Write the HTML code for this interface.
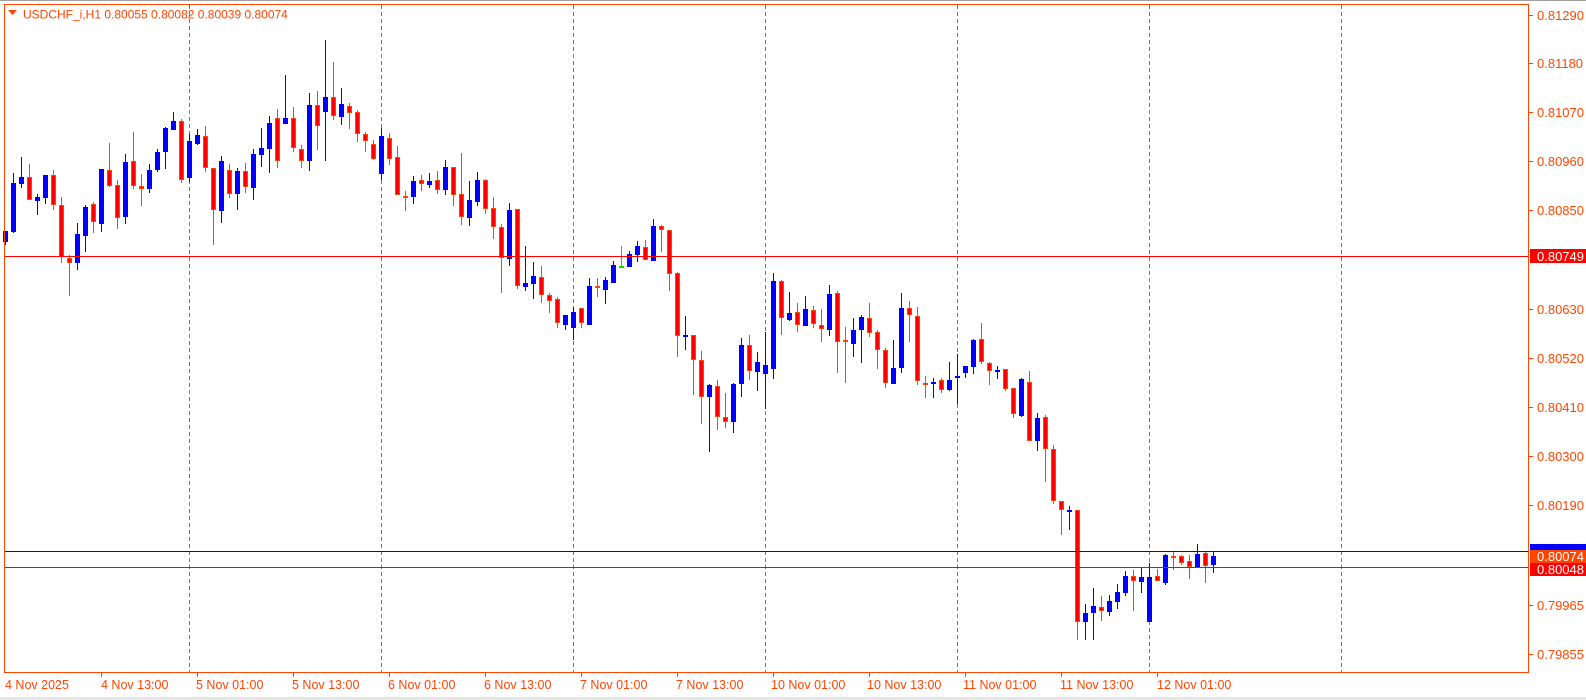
<!DOCTYPE html>
<html><head><meta charset="utf-8">
<style>
html,body{margin:0;padding:0;background:#fff;width:1586px;height:700px;overflow:hidden}
svg{display:block}
text{font-family:"Liberation Sans",Arial,sans-serif}
</style></head>
<body>
<svg id="c" width="1586" height="700" viewBox="0 0 1586 700" xmlns="http://www.w3.org/2000/svg">
<rect x="0" y="0" width="1586" height="700" fill="#fff"/>
<rect x="0" y="0" width="1586" height="1" fill="#a0a0a0"/>
<rect x="0" y="697" width="1586" height="3" fill="#e6e6e6"/>
<g id="grid" stroke="#ff4500" stroke-width="1" stroke-dasharray="4,3">
<line x1="189.5" y1="5" x2="189.5" y2="673"/>
<line x1="381.5" y1="5" x2="381.5" y2="673"/>
<line x1="573.5" y1="5" x2="573.5" y2="673"/>
<line x1="765.5" y1="5" x2="765.5" y2="673"/>
<line x1="957.5" y1="5" x2="957.5" y2="673"/>
<line x1="1149.5" y1="5" x2="1149.5" y2="673"/>
<line x1="1341.5" y1="5" x2="1341.5" y2="673"/>
</g>
<g id="candles"></g>
<line x1="4" y1="256.5" x2="1529" y2="256.5" stroke="#ff0000"/>
<line x1="4" y1="551.5" x2="1529" y2="551.5" stroke="#0000ff"/>
<line x1="4" y1="567.5" x2="1529" y2="567.5" stroke="#ff0000"/>
<rect x="4.5" y="4.5" width="1524" height="668" fill="none" stroke="#ff4500"/>
<g fill="#ff4500" font-size="13" id="axis"></g>
<polygon points="8,10 17,10 12.5,15" fill="#ff4500"/>
<text x="23" y="18.5" font-size="12" fill="#ff4500">USDCHF_i,H1  0.80055 0.80082 0.80039 0.80074</text>
<g fill="#ff4500" font-size="12.5">
<text x="5" y="689">4 Nov 2025</text>
<text x="101" y="689">4 Nov 13:00</text>
<text x="196" y="689">5 Nov 01:00</text>
<text x="292" y="689">5 Nov 13:00</text>
<text x="388" y="689">6 Nov 01:00</text>
<text x="484" y="689">6 Nov 13:00</text>
<text x="580" y="689">7 Nov 01:00</text>
<text x="676" y="689">7 Nov 13:00</text>
<text x="771" y="689">10 Nov 01:00</text>
<text x="867" y="689">10 Nov 13:00</text>
<text x="963" y="689">11 Nov 01:00</text>
<text x="1060" y="689">11 Nov 13:00</text>
<text x="1157" y="689">12 Nov 01:00</text>
</g>
<g stroke="#ff4500">
<line x1="101.5" y1="673" x2="101.5" y2="677"/><line x1="197.5" y1="673" x2="197.5" y2="677"/>
<line x1="293.5" y1="673" x2="293.5" y2="677"/><line x1="389.5" y1="673" x2="389.5" y2="677"/>
<line x1="485.5" y1="673" x2="485.5" y2="677"/><line x1="581.5" y1="673" x2="581.5" y2="677"/>
<line x1="677.5" y1="673" x2="677.5" y2="677"/><line x1="773.5" y1="673" x2="773.5" y2="677"/>
<line x1="869.5" y1="673" x2="869.5" y2="677"/><line x1="965.5" y1="673" x2="965.5" y2="677"/>
<line x1="1061.5" y1="673" x2="1061.5" y2="677"/><line x1="1157.5" y1="673" x2="1157.5" y2="677"/>
</g>
<rect x="1530" y="544" width="56" height="8" fill="#0000ff"/>
<rect x="1530" y="550" width="56" height="13" fill="#ff4500"/>
<text x="1537" y="561" font-size="13" fill="#fff">0.80074</text>
<rect x="1530" y="563" width="56" height="13" fill="#ff0000"/>
<text x="1537" y="574" font-size="13" fill="#fff">0.80048</text>
<rect x="1530" y="249" width="56" height="14" fill="#ff0000"/>
<text x="1537" y="261" font-size="13" fill="#fff">0.80749</text>
</svg>
<script>
var D=[
"b 231 245 231 242","b 173 233 183 232","b 157 188 177 184","r 164 200 177 200","b 194 215 197 201","b 175 204 175 198","r 170 210 175 205","r 197 263 205 257","r 255 296 258 263","b 223 270 234 263",
"b 205 252 207 236","r 202 233 204 222","b 169 232 169 224","r 143 187 170 186","r 180 229 185 218","b 154 224 162 217","r 132 189 161 186","r 174 206 186 189","b 164 193 170 189","b 149 172 152 170",
"b 127 169 128 152","b 112 130 121 130","r 119 183 121 180","b 134 182 141 178","b 129 145 135 144","r 126 172 136 168","r 168 245 168 210","b 156 223 161 211","r 164 198 170 194","b 168 210 171 194",
"r 163 193 171 187","b 149 200 154 188","b 128 167 148 155","b 116 173 123 149","r 109 168 118 161","b 75 124 118 124","r 107 152 118 148","r 145 168 149 161","b 93 171 105 161","r 91 150 105 126",
"b 40 161 97 112","r 62 120 97 116","b 88 125 104 117","r 103 129 106 113","r 110 142 112 134","r 132 152 134 141","r 140 160 144 159","b 128 180 136 174","r 133 165 138 159","r 146 195 157 195",
"r 191 211 196 197","b 176 204 181 197","r 175 191 180 184","b 173 188 181 185","r 171 194 180 190","b 160 195 167 190","r 167 206 167 195","r 153 225 194 217","b 181 226 200 218","b 172 206 180 202",
"r 179 214 180 209","r 197 239 208 227","r 224 293 227 258","b 203 266 210 259","r 209 289 209 286","b 246 291 283 287","b 262 299 276 284","r 266 303 277 295","r 293 313 295 301","r 297 328 299 323",
"b 315 330 315 325","b 307 340 312 328","r 308 328 308 323","b 278 325 286 325","r 278 297 286 288","b 277 304 280 290","b 261 283 265 283","g 246 266 266 266","b 251 267 254 267","b 241 262 246 255",
"r 240 260 247 260","b 219 261 226 261","r 225 252 226 230","r 230 291 230 274","r 272 357 273 336","b 316 350 335 335","r 335 395 335 360","r 351 424 360 397","b 384 452 385 397","r 380 430 386 417",
"r 393 428 417 422","b 383 433 384 422","b 338 397 345 384","r 335 380 345 371","b 352 391 362 372","b 332 409 365 374","b 273 379 281 369","r 280 335 281 318","b 292 321 313 320","r 303 332 312 325",
"b 296 326 309 326","r 306 328 310 324","r 309 342 325 329","b 285 336 294 330","r 291 373 293 342","r 327 383 340 342","b 318 357 330 344","b 315 363 317 330","r 303 337 318 333","r 330 369 332 350",
"r 348 388 350 383","b 340 384 368 384","b 293 373 308 368","r 301 342 308 315","r 307 385 316 381","r 376 398 383 383","b 378 398 382 382","r 378 393 380 390","b 362 391 380 390","b 354 404 376 376",
"b 366 378 366 373","b 339 374 340 367","r 323 364 339 362","r 362 385 363 371","b 366 379 370 370","r 369 391 369 389","r 388 418 388 414","b 378 417 379 416","r 371 441 382 441","b 413 451 418 441",
"r 415 482 417 449","r 445 504 449 501","r 501 535 501 510","b 506 530 510 510","r 510 640 510 622","b 604 640 613 622","b 588 640 606 613","r 596 621 607 611","b 595 616 601 612","b 584 609 592 602",
"b 571 596 576 593","r 570 611 576 581","b 568 593 577 582","b 563 622 577 622","r 569 581 576 581","b 554 585 555 583","r 552 570 556 557","r 555 565 556 563","r 555 579 561 567","b 544 568 554 567",
"r 552 583 553 566","b 552 573 556 565"];
var ns="http://www.w3.org/2000/svg",g=document.getElementById("candles"),h="";
for(var k=0;k<D.length;k++){
 var p=D[k].split(" "),c=p[0],wt=+p[1],wb=+p[2],bt=+p[3],bb=+p[4],x=5+8*k;
 var wc=c=="b"?"#0000ff":(c=="g"?"#00e000":"#ff4500");
 h+='<rect x="'+x+'" y="'+wt+'" width="1" height="'+Math.max(1,wb-wt)+'" fill="'+wc+'"/>';
 if(bb-bt<2){h+='<rect x="'+(x-2)+'" y="'+bt+'" width="5" height="2" fill="'+wc+'"/>';}
 else if(c=="b"){h+='<rect x="'+(x-2)+'" y="'+bt+'" width="5" height="'+(bb-bt)+'" fill="#0000ff"/>';}
 else{h+='<rect x="'+(x-1.5)+'" y="'+(bt+0.5)+'" width="4" height="'+(bb-bt-1)+'" fill="#ff0000" stroke="#ff4500" stroke-width="1"/>';}
}
g.innerHTML=h;
var L=[["0.81290",15],["0.81180",63],["0.81070",112],["0.80960",161],["0.80850",210],["0.80630",309],["0.80520",358],["0.80410",407],["0.80300",456],["0.80190",505],["0.79965",605],["0.79855",654]];
var a="";
for(var i=0;i<L.length;i++){a+='<rect x="1529" y="'+L[i][1]+'" width="4" height="1"/><text x="1537" y="'+(L[i][1]+5)+'">'+L[i][0]+'</text>';}
document.getElementById("axis").innerHTML=a;
</script>
</body></html>
